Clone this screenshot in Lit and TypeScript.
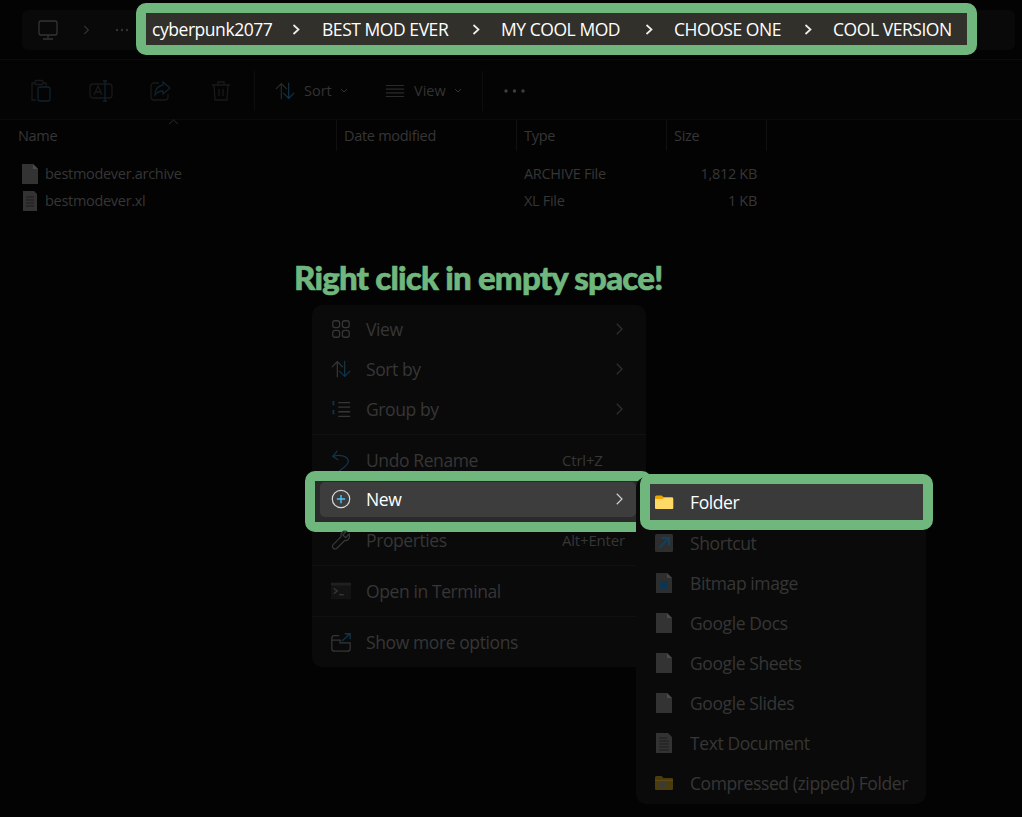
import { LitElement, html, css, svg } from 'lit';
import { customElement } from 'lit/decorators.js';

const dim = '#363636';
const blue = '#123449';

const line = (d: unknown) => html`<svg width="22" height="22" viewBox="0 0 24 24" fill="none" stroke=${dim} stroke-width="1.400">${d}</svg>`;

const chevron = svg`<path d="M9 5l7 7-7 7"/>`;

const icons: Record<string, unknown> = {
  view: line(svg`<rect x="3" y="3" width="7.500" height="7.500" rx="2.500"/><rect x="13.500" y="3" width="7.500" height="7.500" rx="2.500"/><rect x="3" y="13.500" width="7.500" height="7.500" rx="2.500"/><rect x="13.500" y="13.500" width="7.500" height="7.500" rx="2.500"/>`),
  sort: line(svg`<path d="M8 21V4M2 10l6-6 6 6"/><path d="M16 3v17M10 14l6 6 6-6" stroke=${blue}/>`),
  group: line(svg`<path d="M9 5h13M9 10h13M9 15h13M9 20h13"/><path d="M5 4H3.500v3H5M5 14H3.500v3H5" stroke=${blue} stroke-width="1.600"/>`),
  undo: line(svg`<path d="M8 2L3 8l6 4" stroke=${blue}/><path d="M3 8c7-2 16-1 17 5 .5 4-6 8-10 11" stroke=${blue}/>`),
  new: html`<svg width="22" height="22" viewBox="0 0 24 24" fill="none"><circle cx="12" cy="12" r="9.500" stroke="#d8d8d8" stroke-width="1.300"/><path d="M12 7.500v9M7.500 12h9" stroke="#4cc2ff" stroke-width="1.500"/></svg>`,
  props: line(svg`<path d="M21 5.500l-4 4-3-3 4-4c-3.500-1-7 1.500-6 6L3.500 17a2.800 2.800 0 0 0 4 4l8.500-8.500c4 1 6-3 5-7z"/>`),
  terminal: html`<svg width="22" height="22" viewBox="0 0 24 24"><rect x="1" y="3" width="22" height="18" fill="#131313"/><rect x="1" y="3" width="22" height="3" fill="#202020"/><path d="M4 9l4 3-4 3" stroke=${dim} stroke-width="1.500" fill="none"/><path d="M10 16h5" stroke=${dim} stroke-width="1.500"/></svg>`,
  more: line(svg`<path d="M10 5H5a3 3 0 0 0-3 3v11a3 3 0 0 0 3 3h14a3 3 0 0 0 3-3v-6H11v-3H2"/><path d="M13 11l9-8M16 3h6v6" stroke=${blue}/>`),
  folder: html`<svg width="20" height="16" viewBox="0 0 20 16"><path d="M1 3a1.500 1.500 0 0 1 1.500-1.500h5L9.500 3H18a1 1 0 0 1 1 1v2H1z" fill="#eba600"/><path d="M1 5h7.500L10 4h8.500a.8.8 0 0 1 .8.800V14a1 1 0 0 1-1 1H2a1 1 0 0 1-1-1z" fill="#ffd966"/></svg>`,
  shortcut: html`<svg width="22" height="22" viewBox="0 0 22 22"><rect x="2" y="2" width="18" height="18" rx="1.500" fill="#2e2e2e"/><path d="M6 16L16 6M8.500 6H16v7.500" stroke="#12405f" stroke-width="2" fill="none"/></svg>`,
  bitmap: html`<svg width="22" height="22" viewBox="0 0 22 22"><path d="M3 1h11l5 5v15H3z" fill="#2e2e2e"/><path d="M14 1v5h5z" fill="#444"/><rect x="7" y="9" width="8" height="8" fill="#0f3450"/></svg>`,
  doc: html`<svg width="22" height="22" viewBox="0 0 22 22"><path d="M3 1h11l5 5v15H3z" fill="#333"/><path d="M14 1v5h5z" fill="#4a4a4a"/></svg>`,
  text: html`<svg width="22" height="22" viewBox="0 0 22 22"><path d="M3 1h12l4 4v16H3z" fill="#333"/><path d="M6 6h8M6 9h10M6 12h10M6 15h10M6 18h10" stroke="#1c1c1c"/></svg>`,
  zip: html`<svg width="20" height="16" viewBox="0 0 20 16"><path d="M1 2.500A1.500 1.500 0 0 1 2.500 1h5L9.500 3H18a1 1 0 0 1 1 1v10a1 1 0 0 1-1 1H2a1 1 0 0 1-1-1z" fill="#4b3c10"/><path d="M1 5h18v1H1z" fill="#5e4c14"/><rect x="6" y="7" width="6" height="6" fill="#3a3a3a"/></svg>`,
};

const crumbs = [
  ['cyberpunk2077', 6], ['BEST MOD EVER', 176], ['MY COOL MOD', 355], ['CHOOSE ONE', 528], ['COOL VERSION', 687],
] as const;
const crumbChevrons = [146, 326, 499, 658];

@customElement('app-root')
export class AppRoot extends LitElement {
  static styles = css`
    :host {
      display: block;
      position: relative;
      width: 1022px;
      height: 817px;
      overflow: hidden;
      background: #030303;
      font-family: "Open Sans", "Noto Sans", sans-serif;
      color: #363636;
    }

    .address {
      height: 60px;
      box-sizing: border-box;
      padding: 10px 7px 9px 22px;
      border-bottom: 1px solid #0b0b0b;
    }
    .address-inner {
      position: relative;
      height: 40px;
      background: #090909;
      border-radius: 6px;
      display: flex;
      align-items: center;
      gap: 19px;
      padding-left: 14px;
    }
    .crumbs {
      position: absolute;
      left: 114px;
      top: -7px;
      width: 821px;
      height: 32px;
      border: 10px solid #70b77e;
      border-radius: 10px;
      background: #31302b;
      color: #fff;
      font-size: 17.500px;
      letter-spacing: -0.450px;
    }
    .crumbs span { position: absolute; top: 4px; white-space: nowrap; line-height: 24px; }
    .crumbs svg { position: absolute; top: 11px; }

    .toolbar {
      height: 60px;
      display: flex;
      align-items: center;
      padding: 2px 0 0 29px;
      background: #040404;
      border-bottom: 1px solid #0b0b0b;
      box-sizing: border-box;
      font-size: 14.500px;
    }
    .tool { width: 60px; height: 24px; display: flex; }
    .sep { width: 1px; height: 40px; background: #0e0e0e; }
    .drop { display: flex; align-items: center; gap: 8px; color: #333; }

    .header {
      display: grid;
      grid-template-columns: 337px 180px 150px 100px;
      height: 31px;
      font-size: 14.500px;
      letter-spacing: -0.300px;
      position: relative;
    }
    .header div { border-right: 1px solid #101010; padding-left: 7px; line-height: 31px; height: 31px; box-sizing: border-box; }
    .header div:first-of-type { padding-left: 18px; }
    .caret { position: absolute; left: 168px; top: -1px; }

    .rows { padding-top: 9px; }
    .row {
      display: grid;
      grid-template-columns: 516px 150px 91px;
      height: 27px;
      align-items: center;
      font-size: 14.500px;
      letter-spacing: -0.300px;
    }
    .row .name { display: flex; align-items: center; gap: 4px; padding-left: 19px; }
    .row .type { padding-left: 8px; }
    .row .size { text-align: right; }

    .title {
      position: absolute;
      left: 294px;
      top: 257px;
      font-family: "Lato", sans-serif;
      font-weight: 900;
      font-size: 33px;
      line-height: 40px;
      letter-spacing: -0.800px;
      -webkit-text-stroke: 0.600px #70b77e;
      color: #70b77e;
      white-space: nowrap;
    }

    .menu {
      position: absolute;
      background: #0a0a0a;
      border-radius: 10px;
      box-sizing: border-box;
      font-size: 17.500px;
      letter-spacing: -0.400px;
    }
    .main { left: 312px; top: 305px; width: 334px; height: 362px; padding-top: 4px; }
    .sub { left: 636px; top: 477px; width: 290px; height: 327px; padding-top: 5px; z-index: 1; }

    .item {
      position: relative;
      height: 40px;
      display: flex;
      align-items: center;
      padding-left: 18px;
      gap: 14px;
      white-space: nowrap;
    }
    .item .chev { position: absolute; right: 18px; top: 11px; }
    .item .key { position: absolute; left: 250px; font-size: 15px; letter-spacing: -0.200px; }
    .divider { height: 1px; background: #111; margin: 5px 0; }

    .marked { color: #fff; }
    .marked::before {
      content: "";
      position: absolute;
      border: 10px solid #70b77e;
      border-radius: 10px;
    }
    .marked > * { position: relative; }
    .marked.main-mark::before { left: -7px; right: -6px; top: -9px; bottom: -12px; background: #2b2b2b; }
    .main-mark .fill { position: absolute; left: 8px; right: 10px; top: 2px; bottom: 3px; background: #3d3d3d; border-radius: 5px; }
    .main-mark > span, .main-mark > svg:not(.chev) { top: -1px; }
    .main-mark .chev { position: absolute; top: 10px; }
    .marked.sub-mark::before { left: 4px; right: -7px; top: -8px; bottom: -7px; background: #3a3a3a; }
    .sub .item { gap: 15px; padding-left: 17px; }
    .sub .item:first-child { height: 41px; }
    .sub .item.sub-mark > span { top: -1px; }
    .sub .ico { width: 22px; display: flex; justify-content: center; }
  `;

  private item(icon: string, label: string, opts: { key?: string; chev?: boolean } = {}) {
    return html`<div class="item">
      ${icons[icon]}<span>${label}</span>
      ${opts.key ? html`<span class="key">${opts.key}</span>` : ''}
      ${opts.chev ? html`<svg class="chev" width="18" height="18" viewBox="0 0 24 24" fill="none" stroke="#303030" stroke-width="1.600">${chevron}</svg>` : ''}
    </div>`;
  }

  private subItem(icon: string, label: string) {
    return html`<div class="item"><span class="ico">${icons[icon]}</span><span>${label}</span></div>`;
  }

  render() {
    return html`
      <div class="address">
        <div class="address-inner">
          <svg width="24" height="24" viewBox="0 0 24 24" fill="none" stroke="#333" stroke-width="1.300"><rect x="3" y="3" width="18" height="14" rx="2"/><path d="M12 17v3M7 21h10"/></svg>
          <svg width="14" height="14" viewBox="0 0 24 24" fill="none" stroke="#333" stroke-width="2">${chevron}</svg>
          <svg style="margin-left:3px" width="14" height="4" viewBox="0 0 14 4" fill="#333"><circle cx="2" cy="2" r="1.200"/><circle cx="7" cy="2" r="1.200"/><circle cx="12" cy="2" r="1.200"/></svg>
          <div class="crumbs">
            ${crumbs.map(([label, x]) => html`<span style="left:${x}px">${label}</span>`)}
            ${crumbChevrons.map((x) => html`<svg style="left:${x}px" width="8" height="11" viewBox="0 0 8 11" fill="none" stroke="#eee" stroke-width="1.700"><path d="M1.500 1l5 4.500-5 4.500"/></svg>`)}
          </div>
        </div>
      </div>

      <div class="toolbar">
        <div class="tool"><svg width="24" height="24" viewBox="0 0 24 24" fill="none" stroke="#191919" stroke-width="1.300"><path d="M7 21H3V4h3M14 4h3v3"/><rect x="6" y="1.500" width="8" height="4" rx="1"/><rect x="9" y="8" width="12" height="14" rx="2" stroke="#10222e"/></svg></div>
        <div class="tool"><svg width="24" height="24" viewBox="0 0 24 24" fill="none" stroke="#191919" stroke-width="1.300"><rect x="1" y="5" width="22" height="14" rx="3"/><path d="M5 16l4-9 4 9M6.500 13h5"/><path d="M16 2v20M14 2h4M14 22h4" stroke="#10222e"/></svg></div>
        <div class="tool"><svg width="24" height="24" viewBox="0 0 24 24" fill="none" stroke="#191919" stroke-width="1.300"><path d="M10 4H5a3 3 0 0 0-3 3v11a3 3 0 0 0 3 3h11a3 3 0 0 0 3-3v-3"/><path d="M14 3l7 6-7 6v-3c-4 0-6 1-8 4 0-6 3-9 8-10z" stroke="#10222e"/></svg></div>
        <div class="tool" style="width:45px"><svg width="24" height="24" viewBox="0 0 24 24" fill="none" stroke="#191919" stroke-width="1.300"><path d="M3 6h18M9 6V3h6v3M5 6l1 15h12l1-15M10 10v7M14 10v7"/></svg></div>
        <div class="sep"></div>
        <div class="drop" style="margin-left:19px;width:110px">
          <svg width="22" height="22" viewBox="0 0 24 24" fill="none" stroke="#2a2a2a" stroke-width="1.300"><path d="M8 21V4M2 10l6-6 6 6"/><path d="M16 3v17M10 14l6 6 6-6" stroke=${blue}/></svg>
          <span>Sort</span>
          <svg width="8" height="5" viewBox="0 0 8 5" fill="none" stroke="#333"><path d="M1 1l3 3 3-3"/></svg>
        </div>
        <div class="drop" style="width:98px">
          <svg width="22" height="22" viewBox="0 0 24 24" fill="none" stroke="#2a2a2a" stroke-width="1.300"><path d="M2 6h20M2 10h20M2 14h20M2 18h20"/></svg>
          <span>View</span>
          <svg width="8" height="5" viewBox="0 0 8 5" fill="none" stroke="#333"><path d="M1 1l3 3 3-3"/></svg>
        </div>
        <div class="sep"></div>
        <svg style="margin-left:21px" width="21" height="4" viewBox="0 0 21 4" fill="#3f3f3f"><circle cx="2" cy="2" r="1.700"/><circle cx="10.500" cy="2" r="1.700"/><circle cx="19" cy="2" r="1.700"/></svg>
      </div>

      <div class="header">
        <svg class="caret" width="11" height="6" viewBox="0 0 11 6" fill="none" stroke="#2a2a2a"><path d="M1 5l4.500-4L10 5"/></svg>
        <div>Name</div><div>Date modified</div><div>Type</div><div>Size</div>
      </div>
      <div class="rows">
        <div class="row">
          <span class="name"><svg width="22" height="22" viewBox="0 0 22 22"><path d="M3 1h11l5 5v15H3z" fill="#333"/><path d="M14 1v5h5z" fill="#4a4a4a"/></svg>bestmodever.archive</span>
          <span class="type">ARCHIVE File</span><span class="size">1,812 KB</span>
        </div>
        <div class="row">
          <span class="name"><svg width="22" height="22" viewBox="0 0 22 22"><path d="M4 1h11l3 3v17H4z" fill="#333"/><path d="M7 7h8M7 10h8M7 13h8M7 16h8" stroke="#1c1c1c"/></svg>bestmodever.xl</span>
          <span class="type">XL File</span><span class="size">1 KB</span>
        </div>
      </div>

      <div class="title">Right click in empty space!</div>

      <div class="menu main">
        ${this.item('view', 'View', { chev: true })}
        ${this.item('sort', 'Sort by', { chev: true })}
        ${this.item('group', 'Group by', { chev: true })}
        <div class="divider"></div>
        ${this.item('undo', 'Undo Rename', { key: 'Ctrl+Z' })}
        <div class="item marked main-mark">
          <div class="fill"></div>
          ${icons.new}<span>New</span>
          <svg class="chev" width="18" height="18" viewBox="0 0 24 24" fill="none" stroke="#d0d0d0" stroke-width="1.600">${chevron}</svg>
        </div>
        ${this.item('props', 'Properties', { key: 'Alt+Enter' })}
        <div class="divider"></div>
        ${this.item('terminal', 'Open in Terminal')}
        <div class="divider"></div>
        ${this.item('more', 'Show more options')}
      </div>

      <div class="menu sub">
        <div class="item marked sub-mark"><span class="ico">${icons.folder}</span><span>Folder</span></div>
        ${this.subItem('shortcut', 'Shortcut')}
        ${this.subItem('bitmap', 'Bitmap image')}
        ${this.subItem('doc', 'Google Docs')}
        ${this.subItem('doc', 'Google Sheets')}
        ${this.subItem('doc', 'Google Slides')}
        ${this.subItem('text', 'Text Document')}
        ${this.subItem('zip', 'Compressed (zipped) Folder')}
      </div>
    `;
  }
}
